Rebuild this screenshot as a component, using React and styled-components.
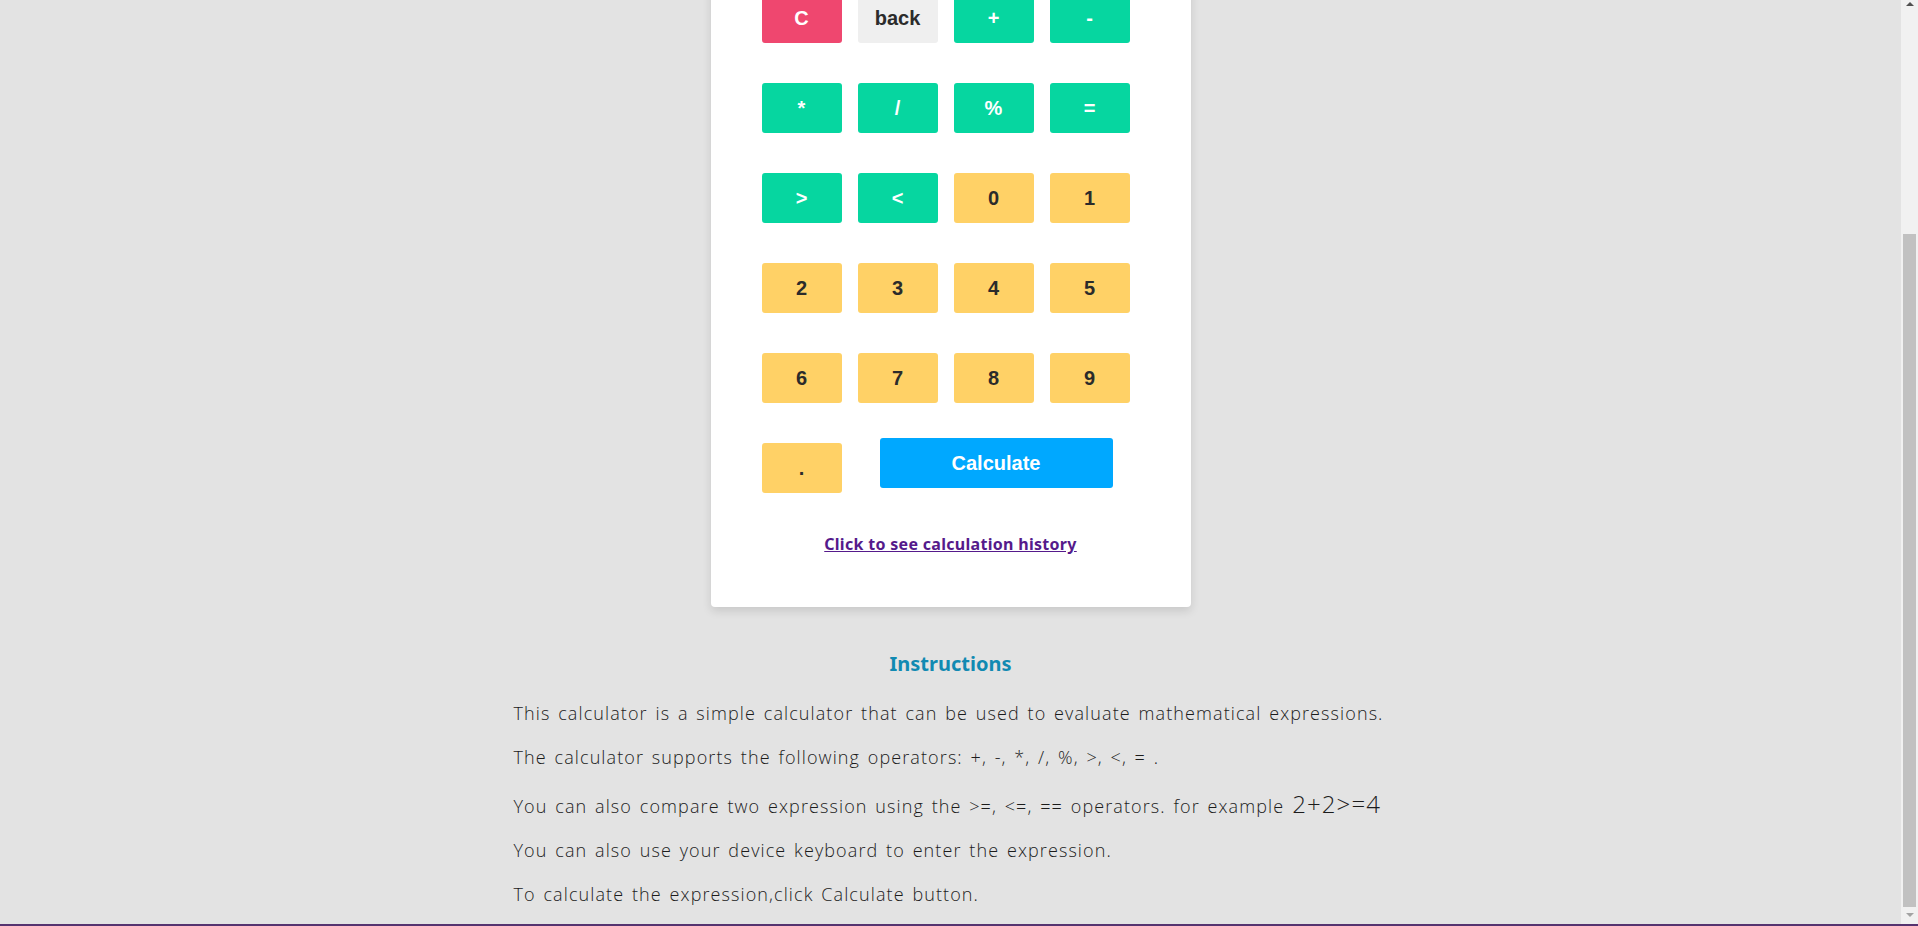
import React, { useLayoutEffect, useRef } from 'react'
import styled, { createGlobalStyle } from 'styled-components'

const GlobalStyle = createGlobalStyle`
  body {
    margin: 0;
    background: #e3e3e3;
    font-family: "Liberation Sans", Arial, sans-serif;
  }
`

const Window = styled.div`
  height: 100vh;
  display: flex;
  flex-direction: column;
  background: #e3e3e3;
`

const Frame = styled.div`
  flex: 1;
  min-height: 0;
  display: flex;
`

const Viewport = styled.div`
  flex: 1;
  overflow-y: auto;
  scrollbar-width: none;
  &::-webkit-scrollbar {
    display: none;
  }
`

/* drawn scrollbar, thumb parked at the bottom */
const ScrollTrack = styled.div`
  width: 17px;
  display: flex;
  flex-direction: column;
  background: #f1f1f1;
`

const ScrollButton = styled.div`
  height: 17px;
  display: flex;
  justify-content: center;
  align-items: flex-start;
  padding-top: ${p => p.$top}px;
  box-sizing: border-box;
`

const Arrow = styled.div`
  width: 0;
  height: 0;
  border-left: 4px solid transparent;
  border-right: 4px solid transparent;
  ${p => p.$up
    ? 'border-bottom: 4px solid #505050;'
    : 'border-top: 4px solid #a3a3a3;'}
`

const ScrollSpace = styled.div`
  flex: 1;
`

const Thumb = styled.div`
  height: 673px;
  margin: 0 2px;
  background: #c1c1c1;
`

const BottomLine = styled.div`
  height: 2px;
  background: #55336f;
`

const Page = styled.div`
  padding-top: 40px;
`

const Card = styled.div`
  width: 480px;
  margin: 0 auto;
  box-sizing: border-box;
  background: #fff;
  border-radius: 4px;
  box-shadow: 0 4px 10px rgba(0, 0, 0, 0.12);
  padding: 30px 61px 53px 51px;
`

const Title = styled.h2`
  margin: 0 0 20px;
  height: 40px;
  line-height: 40px;
  text-align: center;
  font-family: "Noto Sans", sans-serif;
  font-size: 26px;
  color: #118ab2;
`

const Display = styled.div`
  height: 92px;
  margin-bottom: 70px;
  box-sizing: border-box;
  border: 1px solid #ddd;
  border-radius: 4px;
  padding: 10px 14px;
  text-align: right;
  font-size: 32px;
  color: #333;
`

const Keys = styled.div`
  display: flex;
  flex-direction: column;
  gap: 40px;
`

const Row = styled.div`
  display: flex;
  align-items: flex-start;
  gap: 16px;
`

const Key = styled.button`
  width: 80px;
  height: 50px;
  border: none;
  border-radius: 3px;
  padding: 0;
  font-family: "Liberation Sans", Arial, sans-serif;
  font-weight: 700;
  font-size: 20px;
  cursor: pointer;
  background: ${p => p.$bg};
  color: ${p => p.$fg};
`

const CalcButton = styled.button`
  width: 233px;
  height: 50px;
  margin: -5px 0 5px 22px;
  border: none;
  border-radius: 3px;
  background: #00a8ff;
  color: #fff;
  font-family: "Liberation Sans", Arial, sans-serif;
  font-weight: 700;
  font-size: 20px;
  cursor: pointer;
`

const HistoryLink = styled.a`
  display: block;
  margin-top: 41px;
  margin-left: 10px;
  text-align: center;
  font-family: "Noto Sans", sans-serif;
  font-weight: 700;
  font-size: 16px;
  letter-spacing: 0.3px;
  line-height: 20px;
  color: #551a8b;
  text-decoration: underline;
  cursor: pointer;
`

const Instructions = styled.section`
  width: 874px;
  margin: 45px auto 0;
  color: #1c1c1c;
`

const Heading = styled.h3`
  margin: 0 0 23px;
  text-align: center;
  font-family: "Noto Sans", sans-serif;
  font-weight: 700;
  font-size: 20px;
  line-height: 24px;
  color: #118ab2;
`

const Para = styled.p`
  margin: 16px 0;
  font-family: "Open Sans", sans-serif;
  font-weight: 300;
  font-size: 18px;
  line-height: 28px;
  letter-spacing: 1.1px;
  word-spacing: 2px;
`

const Example = styled.span`
  margin-left: 8px;
  font-size: 24px;
  line-height: 33px;
`

const green = ['#06d6a0', '#fff']
const yellow = ['#ffd166', '#2b2b2b']

const rows = [
  [['C', '#ef476f', '#fff'], ['back', '#efefef', '#2b2b2b'], ['+', ...green], ['-', ...green]],
  [['*', ...green], ['/', ...green], ['%', ...green], ['=', ...green]],
  [['>', ...green], ['<', ...green], ['0', ...yellow], ['1', ...yellow]],
  [['2', ...yellow], ['3', ...yellow], ['4', ...yellow], ['5', ...yellow]],
  [['6', ...yellow], ['7', ...yellow], ['8', ...yellow], ['9', ...yellow]],
]

const App = () => {
  const viewport = useRef(null)

  useLayoutEffect(() => {
    const el = viewport.current
    if (el) el.scrollTop = el.scrollHeight
  }, [])

  return (
    <Window>
      <GlobalStyle />
      <Frame>
        <Viewport ref={viewport}>
          <Page>
            <Card>
              <Title>Calculator</Title>
              <Display>0</Display>
              <Keys>
                {rows.map((row, i) => (
                  <Row key={i}>
                    {row.map(([label, bg, fg]) => (
                      <Key key={label} $bg={bg} $fg={fg}>{label}</Key>
                    ))}
                  </Row>
                ))}
                <Row>
                  <Key $bg="#ffd166" $fg="#2b2b2b">.</Key>
                  <CalcButton>Calculate</CalcButton>
                </Row>
              </Keys>
              <HistoryLink>Click to see calculation history</HistoryLink>
            </Card>

            <Instructions>
              <Heading>Instructions</Heading>
              <Para>This calculator is a simple calculator that can be used to evaluate mathematical expressions.</Para>
              <Para>The calculator supports the following operators: +, -, *, /, %, &gt;, &lt;, = .</Para>
              <Para>
                You can also compare two expression using the &gt;=, &lt;=, == operators. for example
                <Example>2+2&gt;=4</Example>
              </Para>
              <Para>You can also use your device keyboard to enter the expression.</Para>
              <Para>To calculate the expression,click Calculate button.</Para>
            </Instructions>
          </Page>
        </Viewport>
        <ScrollTrack>
          <ScrollButton $top={2}><Arrow $up /></ScrollButton>
          <ScrollSpace />
          <Thumb />
          <ScrollButton $top={6}><Arrow /></ScrollButton>
        </ScrollTrack>
      </Frame>
      <BottomLine />
    </Window>
  )
}

export default App
